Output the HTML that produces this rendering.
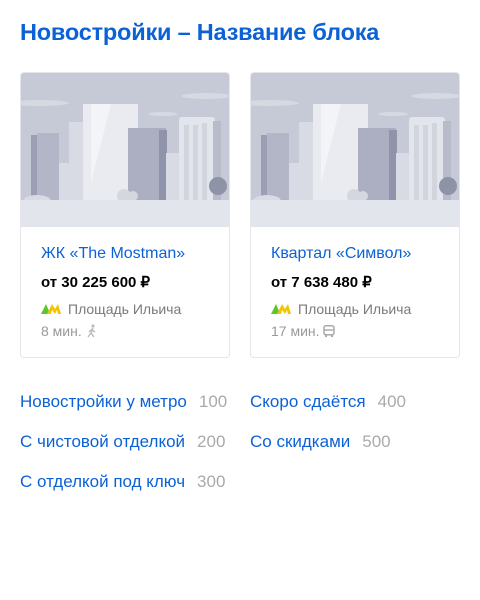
<!DOCTYPE html><html><head><meta charset="utf-8"><style>
body{margin:0;width:480px;height:600px;background:#fff;font-family:"Liberation Sans",sans-serif;position:relative;overflow:hidden}
h1{position:absolute;left:20px;top:19px;margin:0;font-size:23.5px;font-weight:bold;color:#0b62d6;white-space:nowrap;letter-spacing:-0.2px}
.card{position:absolute;top:72px;width:208px;height:284px;border:1px solid #e6e6ea;border-radius:4px;overflow:hidden}
.card > svg{display:block}
.t{position:absolute;left:20px;top:172px;font-size:16px;color:#0b62d6;white-space:nowrap}
.p{position:absolute;left:20px;top:200px;font-size:15px;font-weight:bold;color:#000;white-space:nowrap}
.m{position:absolute;left:20px;top:228px;font-size:14px;color:#7a7a7a;white-space:nowrap}
.m b{display:inline-block;width:27px;vertical-align:-1px}
.d{position:absolute;left:20px;top:250px;font-size:14px;color:#999;white-space:nowrap}
.l{position:absolute;font-size:17px;color:#0b62d6;white-space:nowrap}
.l span{color:#aaa;margin-left:12px}
</style></head><body>
<h1>Новостройки – Название блока</h1>
<svg width="0" height="0" style="position:absolute"><defs><g id="ill">
<rect width="210" height="154" fill="#c6cad6"/>
<ellipse cx="18" cy="30" rx="30" ry="3" fill="#d6d9e2"/>
<ellipse cx="185" cy="23" rx="25" ry="3" fill="#d6d9e2"/>
<ellipse cx="142" cy="41" rx="15" ry="2" fill="#d6d9e2"/>
<rect x="48" y="49" width="16" height="80" fill="#d8dbe3"/>
<rect x="38" y="90" width="12" height="40" fill="#d8dbe3"/>
<rect x="10" y="62" width="6" height="67" fill="#9a9fb3"/>
<rect x="16" y="60" width="22" height="69" fill="#b2b6c6"/>
<rect x="62" y="31" width="55" height="98" fill="#e9ebf0"/>
<polygon points="70,31 90,31 70,110" fill="#f3f4f7"/>
<rect x="107" y="55" width="38" height="74" fill="#abafc1"/>
<rect x="138" y="57" width="8" height="72" fill="#8f94aa"/>
<rect x="145" y="80" width="14" height="49" fill="#d8dbe3"/>
<rect x="158" y="44" width="36" height="85" fill="#e3e5ec" rx="3"/>
<rect x="192" y="48" width="8" height="81" fill="#b7bbca"/>
<rect x="163" y="52" width="5" height="77" fill="#d2d5de"/><rect x="172" y="52" width="5" height="77" fill="#d2d5de"/><rect x="181" y="50" width="5" height="79" fill="#d2d5de"/>
<circle cx="197" cy="113" r="9" fill="#8e93a8"/>
<circle cx="103" cy="123" r="7" fill="#d4d7df"/><circle cx="112" cy="123" r="5" fill="#d4d7df"/>
<ellipse cx="16" cy="128" rx="14" ry="6" fill="#d8dbe3"/>
<rect y="127" width="210" height="27" fill="#e3e5ec"/>
</g></defs></svg>
<div class="card" style="left:20px">
<svg width="210" height="154"><use href="#ill"/></svg>
<div class="t">ЖК «The Mostman»</div>
<div class="p">от 30 225 600 ₽</div>
<div class="m"><b><svg width="20" height="12"><polygon points="0,11 5,1 8,8 7,11" fill="#5cc62b"/><polygon points="6,11 11,1 14,6 17,1 20,11 17,11 16,7 14,11 11,7 10,11" fill="#f2c500"/></svg></b>Площадь Ильича</div>
<div class="d">8 мин. <svg width="12" height="14" style="vertical-align:-2px"><circle cx="7" cy="2" r="1.6" fill="#bbb"/><path d="M7 4 L5 9 L2 13 M5 9 L8 13 M6 6 L9 8 M6 5 L3 8" stroke="#bbb" stroke-width="1.4" fill="none"/></svg></div>
</div>
<div class="card" style="left:250px">
<svg width="210" height="154"><use href="#ill"/></svg>
<div class="t">Квартал «Символ»</div>
<div class="p">от 7 638 480 ₽</div>
<div class="m"><b><svg width="20" height="12"><polygon points="0,11 5,1 8,8 7,11" fill="#5cc62b"/><polygon points="6,11 11,1 14,6 17,1 20,11 17,11 16,7 14,11 11,7 10,11" fill="#f2c500"/></svg></b>Площадь Ильича</div>
<div class="d">17 мин. <svg width="12" height="12" style="vertical-align:-1px"><rect x="1" y="0.75" width="10" height="9" rx="2" fill="none" stroke="#aaa" stroke-width="1.5"/><line x1="1" y1="5" x2="11" y2="5" stroke="#aaa" stroke-width="1.5"/><rect x="2" y="10" width="2" height="2" fill="#aaa"/><rect x="8" y="10" width="2" height="2" fill="#aaa"/></svg></div>
</div>
<div class="l" style="left:20px;top:392px">Новостройки у метро<span>100</span></div>
<div class="l" style="left:20px;top:432px">С чистовой отделкой<span>200</span></div>
<div class="l" style="left:20px;top:472px">С отделкой под ключ<span>300</span></div>
<div class="l" style="left:250px;top:392px">Скоро сдаётся<span>400</span></div>
<div class="l" style="left:250px;top:432px">Со скидками<span>500</span></div>
</body></html>
